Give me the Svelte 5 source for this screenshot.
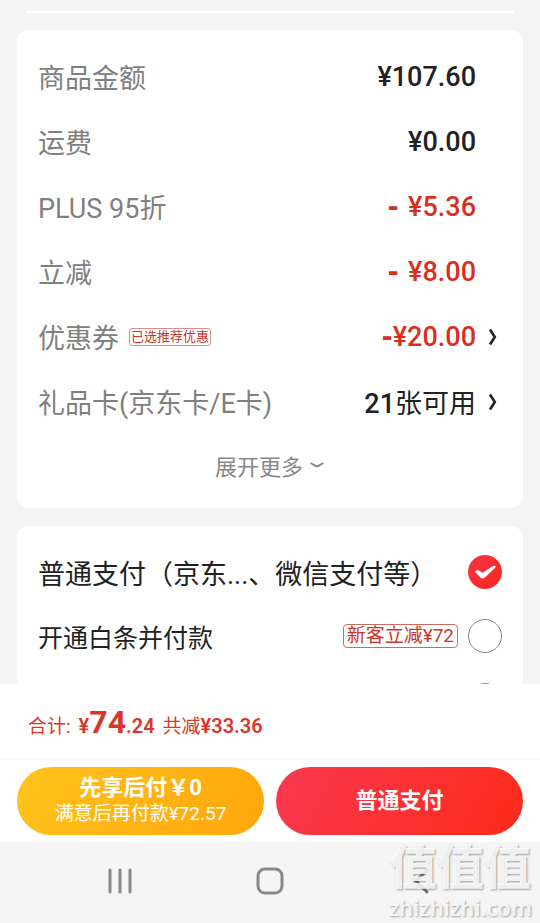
<script>
	let payment = $state("normal");

	const rows = [
		{ label: "商品金额", value: "¥107.60" },
		{ label: "运费", value: "¥0.00" },
		{ label: "PLUS 95折", sign: "- ", value: "¥5.36" },
		{ label: "立减", sign: "- ", value: "¥8.00" },
		{ label: "优惠券", tag: "已选推荐优惠", sign: "-", value: "¥20.00", more: true },
		{ label: "礼品卡(京东卡/E卡)", value: "21", unit: "张可用", more: true },
	];

	const methods = [
		{ id: "normal", label: "普通支付（京东...、微信支付等）" },
		{ id: "baitiao", label: "开通白条并付款", tag: "新客立减¥72", small: true },
		{ id: "other", label: "" },
	];
</script>

<div class="page">
	<main>
		<div class="prev_card"></div>

		<section class="card">
			<dl>
			{#each rows as row}
				<div class="row">
					<dt>{row.label}{#if row.tag}<span class="tag">{row.tag}</span>{/if}</dt>
					<dd class:red={row.sign}>{#if row.sign}<span class="sign">{row.sign}</span>{/if}{row.value}{#if row.unit}<span class="unit">{row.unit}</span>{/if}</dd>
					{#if row.more}
						<button class="arrow" aria-label={row.label}>
							<svg width="10" height="20" viewBox="0 0 10 20"><path d="M2 2.5 L6.8 10 L2 17.5" fill="none" stroke="#222" stroke-width="2.6" /></svg>
						</button>
					{/if}
				</div>
			{/each}
			</dl>
			<button class="expand">展开更多
				<svg width="16" height="8" viewBox="0 0 16 8"><path d="M1.5 2 L6.5 4.8 Q8 5.6 9.5 4.8 L14.5 2" fill="none" stroke="#888" stroke-width="2" /></svg>
			</button>
		</section>

		<section class="card methods">
		{#each methods as m}
			<label class="method" class:small={m.small}>
				<span class="name">{m.label}</span>
				{#if m.tag}<span class="tag big">{m.tag}</span>{/if}
				<span class="radio">
					<input type="radio" name="payment" value={m.id} aria-label={m.label || m.id} bind:group={payment} />
					{#if payment === m.id}
						<svg width="34" height="34" viewBox="0 0 34 34"><path d="M6.8 16.8 Q8.5 14.8 11 15.6 L14.8 17.8 L24 11.6 Q26.8 10 27.6 11.2 Q27.8 12.4 26.2 13.8 L17 22.4 Q14.9 24.2 12.8 22.8 Z" fill="#fff" /></svg>
					{/if}
				</span>
			</label>
		{/each}
		</section>
	</main>

	<footer>
		<p class="total">
			<span>合计:</span><b class="sum">¥<big>74</big>.24</b><span>共减<b>¥33.36</b></span>
		</p>
		<div class="actions">
			<button class="later"><strong>先享后付￥0</strong><span>满意后再付款¥72.57</span></button>
			<button class="pay"><strong>普通支付</strong></button>
		</div>
	</footer>

	<nav>
		<button aria-label="Recents">
			<svg width="26" height="28" viewBox="0 0 26 28"><path d="M3 3 V25 M13 3 V25 M23 3 V25" stroke="#888" stroke-width="3" stroke-linecap="round" /></svg>
		</button>
		<button aria-label="Home">
			<svg width="28" height="28" viewBox="0 0 28 28"><rect x="2" y="2" width="24" height="24" rx="7" fill="none" stroke="#888" stroke-width="3" /></svg>
		</button>
		<button aria-label="Back">
			<svg width="28" height="28" viewBox="0 0 28 28"><path d="M21 3 L10 14 L21 25" fill="none" stroke="#777" stroke-width="3" stroke-linecap="round" /></svg>
		</button>
		<div class="watermark"><span class="zhi">值值值</span><span class="site">zhizhizhi.com</span></div>
	</nav>
</div>

<style>
	:global(body) {
		margin: 0;
		background: #f4f4f4;
	}

	.page {
		height: 100vh;
		display: flex;
		flex-direction: column;
		font-family: Roboto, "Noto Sans CJK SC", sans-serif;
		font-size: 27px;
		color: #222;
	}

	button {
		border: 0;
		padding: 0;
		background: none;
		font: inherit;
		color: inherit;
		cursor: pointer;
	}

	svg {
		display: block;
	}

	main {
		flex: 1;
		min-height: 0;
		overflow: hidden;
		padding: 0 17px;
	}

	.prev_card {
		height: 2px;
		margin: 11px 9px 17px;
		border-radius: 2px;
		background: #fff;
	}

	.card {
		background: #fff;
		border-radius: 12px;
		padding: 14px 21px 12px;
		margin-bottom: 18px;
	}

	dl {
		margin: 0;
	}

	.row {
		display: flex;
		align-items: center;
		height: 65px;
		padding-right: 26px;
	}

	dt {
		flex: 1;
		display: flex;
		align-items: center;
		gap: 10px;
		color: #808080;
	}

	dd {
		margin: 0;
		font-weight: 500;
		white-space: pre;
	}

	.red {
		color: #d8301f;
	}

	.sign {
		font-family: "DejaVu Sans", sans-serif;
		font-weight: 700;
	}

	.unit {
		font-weight: 400;
	}

	.row .arrow {
		margin-left: 12px;
		margin-right: -22px;
	}

	.tag {
		border: 1px solid #dc8e84;
		border-radius: 3px;
		padding: 0 1px;
		font-size: 13px;
		line-height: 16px;
		color: #c8382a;
	}

	.tag.big {
		padding: 0 3px;
		font-size: 19px;
		line-height: 22px;
		border-color: #cf6a60;
		border-radius: 4px;
	}

	.expand {
		display: flex;
		align-items: center;
		justify-content: center;
		gap: 6px;
		width: 100%;
		height: 62px;
		font-size: 22px;
		color: #888;
	}

	.method {
		display: flex;
		align-items: center;
		gap: 10px;
		height: 64px;
	}

	.name {
		flex: 1;
	}

	.small .name {
		font-size: 25px;
	}

	.radio {
		position: relative;
	}

	.radio input {
		appearance: none;
		display: block;
		width: 34px;
		height: 34px;
		margin: 0;
		border: 1px solid #888;
		border-radius: 50%;
	}

	.radio input:checked {
		border: 0;
		background: linear-gradient(135deg, #f93348, #f9281d);
	}

	.radio svg {
		position: absolute;
		inset: 0;
		pointer-events: none;
	}

	footer {
		background: #fff;
		padding-bottom: 7px;
	}

	.total {
		display: flex;
		align-items: baseline;
		gap: 8px;
		height: 57px;
		line-height: 57px;
		margin: 0;
		padding: 10px 28px 8px;
		border-bottom: 1px solid #fafafa;
		font-size: 19px;
		color: #d8382a;
	}

	.total b {
		font-size: 20px;
		font-weight: 600;
	}

	big {
		font-size: 32px;
		font-weight: 700;
	}

	.actions {
		display: flex;
		gap: 12px;
		padding: 7px 17px 0;
	}

	.actions button {
		flex: 1;
		display: flex;
		flex-direction: column;
		align-items: center;
		justify-content: center;
		height: 68px;
		border-radius: 34px;
		color: #fff;
		font-size: 19px;
		line-height: 26px;
	}

	.actions strong {
		font-size: 22px;
		font-weight: 700;
	}

	.later {
		background: linear-gradient(120deg, #ffc31c, #ffa60a);
	}

	.pay {
		background: linear-gradient(120deg, #fa3850, #fc2a18);
	}

	nav {
		position: relative;
		display: flex;
		align-items: center;
		height: 78px;
		padding: 0 45px 3px;
		background: #f5f5f5;
	}

	nav button {
		flex: 1;
		display: flex;
		justify-content: center;
	}

	.watermark {
		position: absolute;
		right: 8px;
		bottom: 3px;
		display: flex;
		flex-direction: column;
		align-items: center;
		gap: 2px;
		color: rgba(255, 255, 255, 0.85);
		text-shadow: 1px 1px 2px rgba(0, 0, 0, 0.35);
		pointer-events: none;
	}

	.zhi {
		font-size: 47px;
		font-weight: 900;
		line-height: 48px;
	}

	.site {
		font-family: "Open Sans", sans-serif;
		font-size: 22px;
		font-weight: 600;
		line-height: 26px;
	}
</style>
